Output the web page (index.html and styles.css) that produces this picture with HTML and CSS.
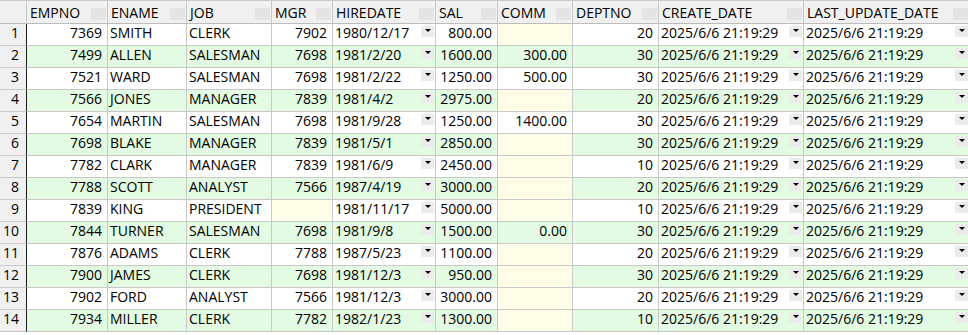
FILE: index.html
```html
<!DOCTYPE html>
<html>
<head>
<meta charset="utf-8">
<link rel="stylesheet" href="styles.css">
</head>
<body>
<div class="grid">
  <div class="row head">
    <div class="c h corner"></div>
    <div class="c h"><span class="ht">EMPNO</span><span class="hb"></span></div>
    <div class="c h"><span class="ht">ENAME</span><span class="hb"></span></div>
    <div class="c h"><span class="ht">JOB</span><span class="hb"></span></div>
    <div class="c h"><span class="ht">MGR</span><span class="hb"></span></div>
    <div class="c h"><span class="ht">HIREDATE</span><span class="hb"></span></div>
    <div class="c h"><span class="ht">SAL</span><span class="hb"></span></div>
    <div class="c h"><span class="ht">COMM</span><span class="hb"></span></div>
    <div class="c h"><span class="ht">DEPTNO</span><span class="hb"></span></div>
    <div class="c h"><span class="ht">CREATE_DATE</span><span class="hb"></span></div>
    <div class="c h"><span class="ht">LAST_UPDATE_DATE</span><span class="hb"></span></div>
  </div>

  <div class="row odd">
    <div class="c num">1</div><div class="c r">7369</div><div class="c">SMITH</div><div class="c">CLERK</div><div class="c r">7902</div>
    <div class="c d"><span class="t">1980/12/17</span><span class="dd"></span></div><div class="c r">800.00</div><div class="c r n"></div><div class="c r">20</div>
    <div class="c d"><span class="t">2025/6/6 21:19:29</span><span class="dd"></span></div><div class="c d"><span class="t">2025/6/6 21:19:29</span><span class="dd"></span></div>
  </div>
  <div class="row even">
    <div class="c num">2</div><div class="c r">7499</div><div class="c">ALLEN</div><div class="c">SALESMAN</div><div class="c r">7698</div>
    <div class="c d"><span class="t">1981/2/20</span><span class="dd"></span></div><div class="c r">1600.00</div><div class="c r">300.00</div><div class="c r">30</div>
    <div class="c d"><span class="t">2025/6/6 21:19:29</span><span class="dd"></span></div><div class="c d"><span class="t">2025/6/6 21:19:29</span><span class="dd"></span></div>
  </div>
  <div class="row odd">
    <div class="c num">3</div><div class="c r">7521</div><div class="c">WARD</div><div class="c">SALESMAN</div><div class="c r">7698</div>
    <div class="c d"><span class="t">1981/2/22</span><span class="dd"></span></div><div class="c r">1250.00</div><div class="c r">500.00</div><div class="c r">30</div>
    <div class="c d"><span class="t">2025/6/6 21:19:29</span><span class="dd"></span></div><div class="c d"><span class="t">2025/6/6 21:19:29</span><span class="dd"></span></div>
  </div>
  <div class="row even">
    <div class="c num">4</div><div class="c r">7566</div><div class="c">JONES</div><div class="c">MANAGER</div><div class="c r">7839</div>
    <div class="c d"><span class="t">1981/4/2</span><span class="dd"></span></div><div class="c r">2975.00</div><div class="c r n"></div><div class="c r">20</div>
    <div class="c d"><span class="t">2025/6/6 21:19:29</span><span class="dd"></span></div><div class="c d"><span class="t">2025/6/6 21:19:29</span><span class="dd"></span></div>
  </div>
  <div class="row odd">
    <div class="c num">5</div><div class="c r">7654</div><div class="c">MARTIN</div><div class="c">SALESMAN</div><div class="c r">7698</div>
    <div class="c d"><span class="t">1981/9/28</span><span class="dd"></span></div><div class="c r">1250.00</div><div class="c r">1400.00</div><div class="c r">30</div>
    <div class="c d"><span class="t">2025/6/6 21:19:29</span><span class="dd"></span></div><div class="c d"><span class="t">2025/6/6 21:19:29</span><span class="dd"></span></div>
  </div>
  <div class="row even">
    <div class="c num">6</div><div class="c r">7698</div><div class="c">BLAKE</div><div class="c">MANAGER</div><div class="c r">7839</div>
    <div class="c d"><span class="t">1981/5/1</span><span class="dd"></span></div><div class="c r">2850.00</div><div class="c r n"></div><div class="c r">30</div>
    <div class="c d"><span class="t">2025/6/6 21:19:29</span><span class="dd"></span></div><div class="c d"><span class="t">2025/6/6 21:19:29</span><span class="dd"></span></div>
  </div>
  <div class="row odd">
    <div class="c num">7</div><div class="c r">7782</div><div class="c">CLARK</div><div class="c">MANAGER</div><div class="c r">7839</div>
    <div class="c d"><span class="t">1981/6/9</span><span class="dd"></span></div><div class="c r">2450.00</div><div class="c r n"></div><div class="c r">10</div>
    <div class="c d"><span class="t">2025/6/6 21:19:29</span><span class="dd"></span></div><div class="c d"><span class="t">2025/6/6 21:19:29</span><span class="dd"></span></div>
  </div>
  <div class="row even">
    <div class="c num">8</div><div class="c r">7788</div><div class="c">SCOTT</div><div class="c">ANALYST</div><div class="c r">7566</div>
    <div class="c d"><span class="t">1987/4/19</span><span class="dd"></span></div><div class="c r">3000.00</div><div class="c r n"></div><div class="c r">20</div>
    <div class="c d"><span class="t">2025/6/6 21:19:29</span><span class="dd"></span></div><div class="c d"><span class="t">2025/6/6 21:19:29</span><span class="dd"></span></div>
  </div>
  <div class="row odd">
    <div class="c num">9</div><div class="c r">7839</div><div class="c">KING</div><div class="c">PRESIDENT</div><div class="c r n"></div>
    <div class="c d"><span class="t">1981/11/17</span><span class="dd"></span></div><div class="c r">5000.00</div><div class="c r n"></div><div class="c r">10</div>
    <div class="c d"><span class="t">2025/6/6 21:19:29</span><span class="dd"></span></div><div class="c d"><span class="t">2025/6/6 21:19:29</span><span class="dd"></span></div>
  </div>
  <div class="row even">
    <div class="c num">10</div><div class="c r">7844</div><div class="c">TURNER</div><div class="c">SALESMAN</div><div class="c r">7698</div>
    <div class="c d"><span class="t">1981/9/8</span><span class="dd"></span></div><div class="c r">1500.00</div><div class="c r">0.00</div><div class="c r">30</div>
    <div class="c d"><span class="t">2025/6/6 21:19:29</span><span class="dd"></span></div><div class="c d"><span class="t">2025/6/6 21:19:29</span><span class="dd"></span></div>
  </div>
  <div class="row odd">
    <div class="c num">11</div><div class="c r">7876</div><div class="c">ADAMS</div><div class="c">CLERK</div><div class="c r">7788</div>
    <div class="c d"><span class="t">1987/5/23</span><span class="dd"></span></div><div class="c r">1100.00</div><div class="c r n"></div><div class="c r">20</div>
    <div class="c d"><span class="t">2025/6/6 21:19:29</span><span class="dd"></span></div><div class="c d"><span class="t">2025/6/6 21:19:29</span><span class="dd"></span></div>
  </div>
  <div class="row even">
    <div class="c num">12</div><div class="c r">7900</div><div class="c">JAMES</div><div class="c">CLERK</div><div class="c r">7698</div>
    <div class="c d"><span class="t">1981/12/3</span><span class="dd"></span></div><div class="c r">950.00</div><div class="c r n"></div><div class="c r">30</div>
    <div class="c d"><span class="t">2025/6/6 21:19:29</span><span class="dd"></span></div><div class="c d"><span class="t">2025/6/6 21:19:29</span><span class="dd"></span></div>
  </div>
  <div class="row odd">
    <div class="c num">13</div><div class="c r">7902</div><div class="c">FORD</div><div class="c">ANALYST</div><div class="c r">7566</div>
    <div class="c d"><span class="t">1981/12/3</span><span class="dd"></span></div><div class="c r">3000.00</div><div class="c r n"></div><div class="c r">20</div>
    <div class="c d"><span class="t">2025/6/6 21:19:29</span><span class="dd"></span></div><div class="c d"><span class="t">2025/6/6 21:19:29</span><span class="dd"></span></div>
  </div>
  <div class="row even">
    <div class="c num">14</div><div class="c r">7934</div><div class="c">MILLER</div><div class="c">CLERK</div><div class="c r">7782</div>
    <div class="c d"><span class="t">1982/1/23</span><span class="dd"></span></div><div class="c r">1300.00</div><div class="c r n"></div><div class="c r">10</div>
    <div class="c d"><span class="t">2025/6/6 21:19:29</span><span class="dd"></span></div><div class="c d"><span class="t">2025/6/6 21:19:29</span><span class="dd"></span></div>
  </div>
</div>
</body>
</html>
```

FILE: styles.css
```css
html, body {
  margin: 0;
  padding: 0;
  background: #ffffff;
  overflow: hidden;
}
body {
  font-family: "Open Sans", "Noto Sans", sans-serif;
  font-size: 14px;
  color: #000000;
}
.grid {
  display: grid;
  grid-template-columns: 27px 81px 79px 85px 61px 103px 62px 75px 86px 145px 166px;
  grid-template-rows: 24px;
  grid-auto-rows: 22px;
  width: 970px;
}
.row {
  display: contents;
}
.c {
  box-sizing: border-box;
  display: flex;
  align-items: flex-start;
  border-right: 1px solid #c8c8c8;
  border-bottom: 1px solid #c8c8c8;
  padding: 0 2px;
  line-height: 17px;
  white-space: nowrap;
  overflow: hidden;
}
.odd > .c {
  background: #ffffff;
}
.even > .c {
  background: #e2fbe2;
}
.row > .n {
  background: #fefde7;
}
.row > .num {
  background: #f0f0f0;
  justify-content: flex-end;
  padding-right: 7px;
  border-right-color: #1c1c1c;
}
.r {
  justify-content: flex-end;
  padding-right: 5px;
}
.head > .h {
  background: #f0f0f0;
  border-top: 1px solid #c8c8c8;
  border-bottom-color: #bcbcbc;
  padding: 3px 0 0 3px;
}
.ht {
  flex: 1;
}
.hb {
  width: 15px;
  height: 12px;
  margin: 4px 1px 0 0;
  background: #e4e4e4;
}
.d {
  padding-right: 0;
}
.t {
  flex: 1;
}
.dd {
  box-sizing: border-box;
  display: flex;
  justify-content: center;
  width: 13px;
  height: 11px;
  margin: 2px 1px 0 0;
  padding-top: 3px;
  background: #ebebeb;
}
.dd::after {
  content: "";
  width: 0;
  height: 0;
  border-left: 3px solid transparent;
  border-right: 3px solid transparent;
  border-top: 3px solid #000000;
}
```
